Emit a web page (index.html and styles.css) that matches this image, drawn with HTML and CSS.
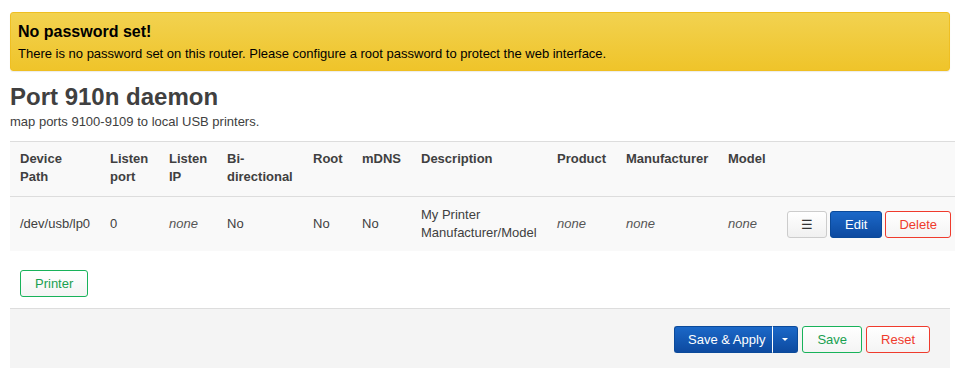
FILE: index.html
```html
<!DOCTYPE html>
<html>
<head>
<meta charset="utf-8">
<link rel="stylesheet" href="styles.css">
</head>
<body>
<div class="page">
  <div class="alert">
    <h4 class="alert-title">No password set!</h4>
    <p class="alert-text">There is no password set on this router. Please configure a root password to protect the web interface.</p>
  </div>

  <h2 class="title">Port 910n daemon</h2>
  <p class="desc">map ports 9100-9109 to local USB printers.</p>

  <table class="tbl">
    <thead>
      <tr>
        <th class="c1">Device<br>Path</th>
        <th class="c2">Listen<br>port</th>
        <th class="c3">Listen<br>IP</th>
        <th class="c4">Bi-<br>directional</th>
        <th class="c5">Root</th>
        <th class="c6">mDNS</th>
        <th class="c7">Description</th>
        <th class="c8">Product</th>
        <th class="c9">Manufacturer</th>
        <th class="c10">Model</th>
        <th class="c11"></th>
      </tr>
    </thead>
    <tbody>
      <tr>
        <td>/dev/usb/lp0</td>
        <td>0</td>
        <td><em>none</em></td>
        <td>No</td>
        <td>No</td>
        <td>No</td>
        <td>My Printer<br>Manufacturer/Model</td>
        <td><em>none</em></td>
        <td><em>none</em></td>
        <td><em>none</em></td>
        <td class="actions">
          <div class="btn-row">
            <button class="btn btn-neutral">☰</button>
            <button class="btn btn-primary">Edit</button>
            <button class="btn btn-negative">Delete</button>
          </div>
        </td>
      </tr>
    </tbody>
  </table>

  <div class="add-row">
    <button class="btn btn-add">Printer</button>
  </div>

  <div class="page-actions">
    <div class="split">
      <button class="btn btn-primary split-main">Save &amp; Apply</button><button class="btn btn-primary split-arrow"><span class="caret"></span></button>
    </div>
    <button class="btn btn-save">Save</button>
    <button class="btn btn-negative btn-reset">Reset</button>
  </div>
</div>
</body>
</html>
```

FILE: styles.css
```css
html {
  overflow: hidden;
}
body {
  margin: 0;
  font-family: "Liberation Sans", Arial, sans-serif;
  font-size: 13px;
  color: #404040;
  background: #fff;
}
.page {
  padding: 12px 5px 0 10px;
}
.alert {
  border: 1px solid #efbf22;
  border-radius: 3px;
  background: linear-gradient(#f2d250, #efc42a);
  padding: 9px 8px 6px 7px;
  color: #000;
  box-shadow: 0 1px 1px rgba(0,0,0,0.08);
}
.alert-title {
  margin: 0 0 2px;
  font-size: 16px;
  line-height: 20px;
  font-weight: bold;
}
.alert-text {
  margin: 0;
  font-size: 13px;
  line-height: 20px;
}
.title {
  margin: 13px 0 3px;
  font-size: 24px;
  line-height: 26px;
  font-weight: bold;
  color: #404040;
}
.desc {
  margin: 0 0 10px;
  font-size: 13px;
  line-height: 18px;
}
.tbl {
  border-collapse: collapse;
  border-top: 1px solid #ddd;
  background: #f9f9f9;
  table-layout: fixed;
  width: 951px;
}
.tbl th, .tbl td {
  padding: 8px 10px 10px;
  text-align: left;
  vertical-align: top;
  line-height: 18px;
  font-size: 13px;
}
.tbl th {
  font-weight: bold;
}
.tbl td {
  border-top: 1px solid #ddd;
  vertical-align: middle;
  padding: 9px 10px 9px;
}
.tbl em {
  color: #555;
}
.c1 { width: 70px; }
.c2 { width: 39px; }
.c3 { width: 38px; }
.c4 { width: 66px; }
.c5 { width: 29px; }
.c6 { width: 39px; }
.c7 { width: 116px; }
.c8 { width: 49px; }
.c9 { width: 82px; }
.c10 { width: 39px; }
.c11 { width: 174px; }
.actions {
  white-space: nowrap;
}
.btn-row {
  display: flex;
  gap: 3px;
}
.btn {
  font-family: "Liberation Sans", Arial, sans-serif;
  font-size: 13px;
  height: 27px;
  line-height: 25px;
  padding: 0 14px;
  border: 1px solid #ccc;
  border-radius: 3px;
  background: linear-gradient(#fff, #f0f0f0);
  color: #404040;
  cursor: pointer;
  box-sizing: border-box;
}
.btn-neutral {
  color: #333;
  width: 40px;
  padding: 0;
}
.btn-primary {
  border-color: #0b4a9a;
  background: linear-gradient(#1b68c8, #0d4aa0);
  color: #fff;
}
.btn-negative {
  border-color: #ef3b2d;
  color: #ef3b2d;
  background: linear-gradient(#fff, #f4f4f4);
  padding: 0 13px;
}
.btn-reset {
  padding: 0 14px;
}
.btn-add, .btn-save {
  border-color: #18b25a;
  color: #18a050;
  background: linear-gradient(#fff, #f4f4f4);
}
.add-row {
  padding: 19px 10px 11px;
}
.page-actions {
  border-top: 1px solid #ddd;
  background: #f4f4f4;
  display: flex;
  justify-content: flex-end;
  gap: 4px;
  padding: 17px 20px 0;
  height: 60px;
  box-sizing: border-box;
}
.split {
  display: flex;
}
.split-main {
  border-radius: 3px 0 0 3px;
  padding: 0 7px 0 13px;
  border-right: none;
}
.split-arrow {
  border-radius: 0 3px 3px 0;
  padding: 0;
  width: 26px;
  border-left: 1px solid #fff;
  display: flex;
  align-items: center;
  justify-content: center;
}
.caret {
  width: 0;
  height: 0;
  border-left: 3px solid transparent;
  border-right: 3px solid transparent;
  border-top: 3px solid #fff;
}
```
